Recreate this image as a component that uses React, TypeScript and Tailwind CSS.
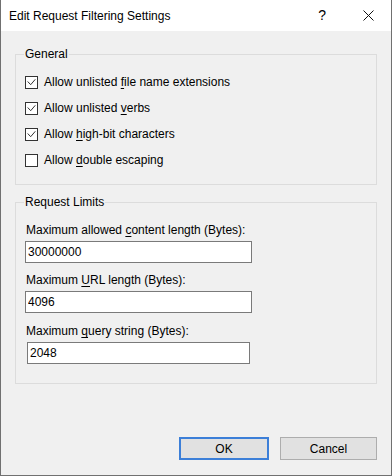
import React from 'react';

const font = { fontFamily: '"Liberation Sans", Arial, sans-serif' };

const CheckRow = ({ checked, before, hot, after }: { checked: boolean; before: string; hot: string; after: string }) => (
  <div className="flex h-[26px] items-center">
    <div className="flex h-[13px] w-[13px] items-center justify-center border border-[#333333] bg-white">
      {checked && (
        <svg width="11" height="11" viewBox="0 0 11 11" fill="none">
          <path d="M1.7 4.5 L4.7 7.7 L9.3 2.3" stroke="#333333" strokeWidth="1" />
        </svg>
      )}
    </div>
    <span className="ml-[6px] text-[12px] leading-[16px] text-black">
      {before}
      <span className="underline underline-offset-2">{hot}</span>
      {after}
    </span>
  </div>
);

const Field = ({ before, hot, after, value, narrow }: { before: string; hot: string; after: string; value: string; narrow?: boolean }) => (
  <div className="flex flex-col">
    <div className="h-[16px] pl-[1px] text-[12px] leading-[16px] text-black">
      {before}
      <span className="underline underline-offset-2">{hot}</span>
      {after}
    </div>
    <input
      readOnly
      value={value}
      className={`mt-[3px] h-[22px] border border-[#7a7a7a] bg-white pl-[2px] text-[12px] text-black outline-none ${narrow ? 'ml-[2px] w-[223px]' : 'w-[227px]'}`}
      style={font}
    />
  </div>
);

export default function App() {
  return (
    <div className="flex h-[476px] w-[392px] flex-col border border-t-0 border-[#707070] bg-[#f0f0f0] text-black" style={font}>
      <div className="flex h-[31px] items-center bg-white pl-[8px]">
        <span className="text-[12px]">Edit Request Filtering Settings</span>
        <span className="ml-auto mr-[37px] text-[14px]">?</span>
        <svg width="11" height="11" viewBox="0 0 11 11" className="mr-[17px]">
          <path d="M0.5 0.5 L10.5 10.5 M10.5 0.5 L0.5 10.5" stroke="#111" strokeWidth="1" />
        </svg>
      </div>

      <fieldset className="mx-[14px] mt-[15px] border border-[#dcdcdc] px-[9px] pt-[7px] pb-[11px]">
        <legend className="ml-[-1px] px-[1px] text-[12px] leading-[16px]">General</legend>
        <CheckRow checked before="Allow unlisted " hot="f" after="ile name extensions" />
        <CheckRow checked before="Allow unlisted " hot="v" after="erbs" />
        <CheckRow checked before="Allow " hot="h" after="igh-bit characters" />
        <CheckRow checked={false} before="Allow " hot="d" after="ouble escaping" />
      </fieldset>

      <fieldset className="mx-[14px] mt-[9px] flex flex-col border border-[#dcdcdc] px-[9px] pt-[12px] pb-[19px]">
        <legend className="ml-[-1px] px-[1px] text-[12px] leading-[16px]">Request Limits</legend>
        <Field before="Maximum allowed " hot="c" after="ontent length (Bytes):" value="30000000" />
        <div className="mt-[9px]">
          <Field before="Maximum " hot="U" after="RL length (Bytes):" value="4096" />
        </div>
        <div className="mt-[10px]">
          <Field before="Maximum " hot="q" after="uery string (Bytes):" value="2048" narrow />
        </div>
      </fieldset>

      <div className="flex-1" />

      <div className="mb-[15px] mr-[14px] flex justify-end gap-[11px]">
        <button className="h-[23px] w-[90px] border-2 border-[#3c7fd8] bg-[#e1e1e1] text-[12px]" style={font}>OK</button>
        <button className="h-[23px] w-[97px] border border-[#adadad] bg-[#e1e1e1] text-[12px]" style={font}>Cancel</button>
      </div>
    </div>
  );
}
